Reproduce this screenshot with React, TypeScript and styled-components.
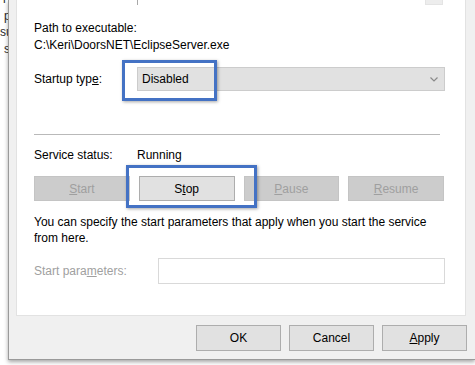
import styled, { createGlobalStyle } from 'styled-components'

const GlobalStyle = createGlobalStyle`
	html, body {
		margin: 0;
		padding: 0;
		background: #ffffff;
	}
	body {
		width: 475px;
		height: 365px;
		overflow: hidden;
		font-family: 'Liberation Sans', Arial, sans-serif;
		font-size: 12px;
		color: #000000;
	}
`

function Chevron() {
	return (
		<svg width="8" height="5" viewBox="0 0 8 5">
			<polyline points="0.5,0.5 4,4 7.5,0.5" fill="none" stroke="#8a8a8a" strokeWidth="1.2" />
		</svg>
	)
}

function App() {
	return (
		<Stage>
			<GlobalStyle />
			<Peek>
				<PeekLine $indent={3}>r</PeekLine>
				<PeekLine $indent={4}>p</PeekLine>
				<PeekLine $indent={0}>su</PeekLine>
				<PeekLine $indent={4}>s</PeekLine>
			</Peek>
			<Dialog>
				<Panel>
					<DescStub>
						<ScrollArrow />
					</DescStub>
					<Label $top={15}>Path to executable:</Label>
					<Label $top={1}>C:\Keri\DoorsNET\EclipseServer.exe</Label>
					<Row $top={14}>
						<RowLabel $width={103}>
							Startup typ<u>e</u>:
						</RowLabel>
						<Select>
							<span>Disabled</span>
							<Chevron />
						</Select>
					</Row>
					<Separator />
					<Row $top={12}>
						<RowLabel $width={103}>Service status:</RowLabel>
						<span>Running</span>
					</Row>
					<ButtonRow>
						<ServiceButton disabled>
							<u>S</u>tart
						</ServiceButton>
						<ServiceButton>
							S<u>t</u>op
						</ServiceButton>
						<ServiceButton disabled>
							<u>P</u>ause
						</ServiceButton>
						<ServiceButton disabled>
							<u>R</u>esume
						</ServiceButton>
					</ButtonRow>
					<Note>
						You can specify the start parameters that apply when you start the service from here.
					</Note>
					<Row $top={12}>
						<RowLabel $width={124} $muted>
							Start para<u>m</u>eters:
						</RowLabel>
						<TextInput />
					</Row>
				</Panel>
				<Footer>
					<FooterButton>OK</FooterButton>
					<FooterButton>Cancel</FooterButton>
					<FooterButton>
						<u>A</u>pply
					</FooterButton>
				</Footer>
			</Dialog>
			<Highlight $left={122} $top={60} $width={95} $height={41} />
			<Highlight $left={126} $top={165} $width={131} $height={43} />
		</Stage>
	)
}
export default App

const Stage = styled.div`
	position: relative;
	display: flex;
	width: 475px;
	height: 365px;
	overflow: hidden;
	background: #ffffff;
`
const Peek = styled.div`
	width: 8px;
	flex-shrink: 0;
	overflow: hidden;
	display: flex;
	flex-direction: column;
	margin-top: -9px;
`
const PeekLine = styled.div<{ $indent: number }>`
	line-height: 16.5px;
	height: 16.5px;
	padding-left: ${({ $indent }) => $indent}px;
	color: #2a2a2a;
	white-space: nowrap;
`
const Dialog = styled.div`
	flex: 1;
	height: 359px;
	display: flex;
	flex-direction: column;
	background: #f0f0f0;
	border-left: 1px solid #9a9a9a;
	border-bottom: 1px solid #9a9a9a;
	box-shadow: 0 2px 4px rgba(0, 0, 0, 0.35);
	padding-left: 7px;
	box-sizing: content-box;
`
const Panel = styled.div`
	width: 450px;
	height: 316px;
	box-sizing: border-box;
	background: #ffffff;
	border-left: 1px solid #e2e2e2;
	border-right: 1px solid #e2e2e2;
	border-bottom: 1px solid #e2e2e2;
	padding: 0 20px 0 17px;
	display: flex;
	flex-direction: column;
`
const DescStub = styled.div`
	margin-left: 103px;
	width: 308px;
	height: 5px;
	box-sizing: border-box;
	border-left: 1px solid #a8a8a8;
	display: flex;
	justify-content: flex-end;
	padding-right: 2px;
`
const ScrollArrow = styled.div`
	width: 18px;
	height: 5px;
	background: #ededed;
	border: 1px solid #e4e4e4;
	border-top: none;
	box-sizing: border-box;
`
const Label = styled.div<{ $top: number }>`
	margin-top: ${({ $top }) => $top}px;
	line-height: 16px;
	white-space: nowrap;
`
const Row = styled.div<{ $top: number }>`
	margin-top: ${({ $top }) => $top}px;
	display: flex;
	align-items: center;
	line-height: 16px;
`
const RowLabel = styled.div<{ $width: number; $muted?: boolean }>`
	width: ${({ $width }) => $width}px;
	flex-shrink: 0;
	color: ${({ $muted }) => ($muted ? '#a0a0a0' : '#000000')};
`
const Select = styled.div`
	flex: 1;
	height: 24px;
	box-sizing: border-box;
	background: #e1e1e1;
	border: 1px solid #cccccc;
	display: flex;
	align-items: center;
	justify-content: space-between;
	padding: 0 6px 0 4px;
`
const Separator = styled.div`
	margin-top: 43px;
	width: 406px;
	height: 1px;
	background: #b9b9b9;
`
const ButtonRow = styled.div`
	margin-top: 13px;
	width: 410px;
	display: grid;
	grid-template-columns: repeat(4, 1fr);
	gap: 9px;
`
const ServiceButton = styled.button`
	height: 25px;
	box-sizing: border-box;
	font-family: inherit;
	font-size: 12px;
	padding: 0;
	background: ${({ disabled }) => (disabled ? '#cccccc' : '#e1e1e1')};
	border: 1px solid ${({ disabled }) => (disabled ? '#c4c4c4' : '#adadad')};
	color: ${({ disabled }) => (disabled ? '#9f9f9f' : '#000000')};
	border-radius: 0;
`
const Note = styled.p`
	margin: 13px 0 0 0;
	width: 411px;
	line-height: 16px;
`
const TextInput = styled.div`
	flex: 1;
	height: 26px;
	box-sizing: border-box;
	background: #ffffff;
	border: 1px solid #d9d9d9;
`
const Footer = styled.div`
	flex: 1;
	display: flex;
	align-items: center;
	justify-content: flex-end;
	gap: 8px;
	padding-right: 8px;
	padding-top: 1px;
`
const FooterButton = styled.button`
	width: 85px;
	height: 26px;
	box-sizing: border-box;
	font-family: inherit;
	font-size: 12px;
	padding: 0;
	background: #e1e1e1;
	border: 1px solid #adadad;
	border-radius: 0;
	color: #000000;
`
const Highlight = styled.div<{ $left: number; $top: number; $width: number; $height: number }>`
	position: absolute;
	left: ${({ $left }) => $left}px;
	top: ${({ $top }) => $top}px;
	width: ${({ $width }) => $width}px;
	height: ${({ $height }) => $height}px;
	box-sizing: border-box;
	border: 3px solid #4472c4;
	box-shadow: 1px 1px 3px rgba(0, 0, 0, 0.35);
	pointer-events: none;
`
